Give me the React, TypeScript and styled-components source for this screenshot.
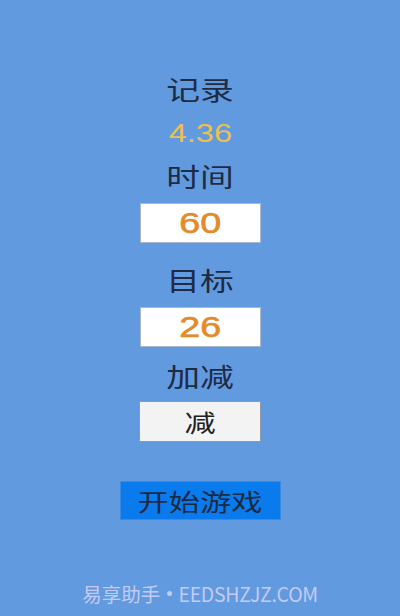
import React from 'react'
import styled, { createGlobalStyle } from 'styled-components'

const GlobalStyle = createGlobalStyle`
	html, body {
		margin: 0;
		padding: 0;
		background: #629ae0;
	}
	body {
		font-family: 'Noto Sans CJK SC', 'Liberation Sans', sans-serif;
	}
`

const Screen = styled.div`
	position: relative;
	width: 400px;
	height: 616px;
	background: #629ae0;
	display: flex;
	flex-direction: column;
	align-items: center;
	padding-top: 69px;
	box-sizing: border-box;
`

// the app's text is drawn a little wide
const Wide = styled.span`
	display: inline-block;
	transform: scaleX(1.3);
`

const Label = styled.div<{ $top?: number }>`
	height: 40px;
	line-height: 40px;
	margin-top: ${(p) => p.$top ?? 0}px;
	font-size: 26px;
	color: #1f2b45;
`

const Record = styled.div`
	height: 40px;
	line-height: 40px;
	margin-top: 4px;
	font-family: 'Liberation Sans', Arial, sans-serif;
	font-size: 25px;
	color: #ecc04c;
`

const NumberField = styled.div<{ $top: number }>`
	width: 121px;
	height: 40px;
	margin-top: ${(p) => p.$top}px;
	box-sizing: border-box;
	background: #ffffff;
	border: 1px solid #a9b8cc;
	display: flex;
	align-items: center;
	justify-content: center;
	font-family: 'Liberation Sans', Arial, sans-serif;
	font-size: 29px;
	color: #e38a2b;
	-webkit-text-stroke: 0.6px #e38a2b;
`

const ModeButton = styled.div`
	width: 122px;
	height: 41px;
	margin-top: 5px;
	box-sizing: border-box;
	background: #f3f3f3;
	border: 1px solid #8f9aa8;
	display: flex;
	align-items: center;
	justify-content: center;
	font-size: 24px;
	color: #222222;
`

const StartButton = styled.div`
	width: 161px;
	height: 39px;
	margin-top: 39px;
	box-sizing: border-box;
	background: #0a7bec;
	border: 1px solid #3a8be0;
	display: flex;
	align-items: center;
	justify-content: center;
	font-size: 24px;
	color: #1b2a44;
`

const Watermark = styled.div`
	position: absolute;
	left: 0;
	right: 0;
	bottom: 10px;
	display: flex;
	justify-content: center;
	align-items: center;
	gap: 6px;
	font-size: 19.5px;
	color: #c4cbf2;
	line-height: 24px;
`

const Dot = styled.span`
	font-family: 'Liberation Sans', Arial, sans-serif;
	font-size: 18px;
`

const Site = styled.span`
	letter-spacing: -0.3px;
`

export default function App() {
	return (
		<>
			<GlobalStyle />
			<Screen>
				<Label>
					<Wide>记录</Wide>
				</Label>
				<Record>
					<Wide>4.36</Wide>
				</Record>
				<Label $top={3}>
					<Wide>时间</Wide>
				</Label>
				<NumberField $top={7}>
					<Wide>60</Wide>
				</NumberField>
				<Label $top={17}>
					<Wide>目标</Wide>
				</Label>
				<NumberField $top={7}>
					<Wide>26</Wide>
				</NumberField>
				<Label $top={9}>
					<Wide>加减</Wide>
				</Label>
				<ModeButton>
					<Wide>减</Wide>
				</ModeButton>
				<StartButton>
					<Wide>开始游戏</Wide>
				</StartButton>
				<Watermark>
					<span>易享助手</span>
					<Dot>•</Dot>
					<Site>EEDSHZJZ.COM</Site>
				</Watermark>
			</Screen>
		</>
	)
}
